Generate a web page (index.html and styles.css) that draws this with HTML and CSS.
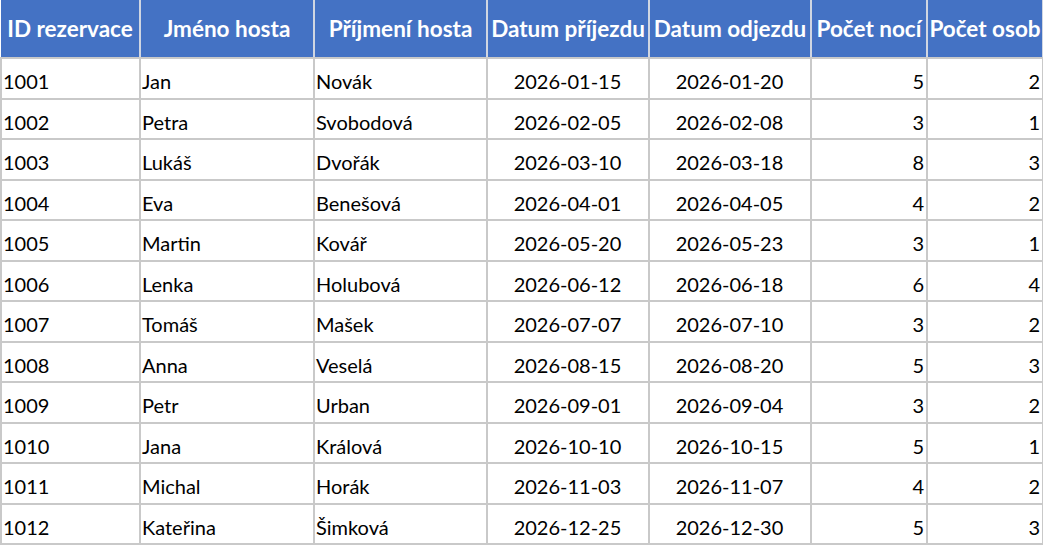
FILE: index.html
```html
<!DOCTYPE html>
<html lang="cs">
<head>
<meta charset="utf-8">
<title>Rezervace</title>
<link rel="stylesheet" href="styles.css">
</head>
<body>
<table class="grid">
  <colgroup>
    <col class="c-id"><col class="c-name"><col class="c-sur"><col class="c-date"><col class="c-date"><col class="c-num"><col class="c-num">
  </colgroup>
  <thead>
    <tr>
      <th>ID rezervace</th><th>Jméno hosta</th><th>Příjmení hosta</th><th>Datum příjezdu</th><th>Datum odjezdu</th><th>Počet nocí</th><th>Počet osob</th>
    </tr>
  </thead>
  <tbody>
    <tr><td>1001</td><td>Jan</td><td>Novák</td><td class="ctr">2026-01-15</td><td class="ctr">2026-01-20</td><td class="num">5</td><td class="num">2</td></tr>
    <tr><td>1002</td><td>Petra</td><td>Svobodová</td><td class="ctr">2026-02-05</td><td class="ctr">2026-02-08</td><td class="num">3</td><td class="num">1</td></tr>
    <tr><td>1003</td><td>Lukáš</td><td>Dvořák</td><td class="ctr">2026-03-10</td><td class="ctr">2026-03-18</td><td class="num">8</td><td class="num">3</td></tr>
    <tr><td>1004</td><td>Eva</td><td>Benešová</td><td class="ctr">2026-04-01</td><td class="ctr">2026-04-05</td><td class="num">4</td><td class="num">2</td></tr>
    <tr><td>1005</td><td>Martin</td><td>Kovář</td><td class="ctr">2026-05-20</td><td class="ctr">2026-05-23</td><td class="num">3</td><td class="num">1</td></tr>
    <tr><td>1006</td><td>Lenka</td><td>Holubová</td><td class="ctr">2026-06-12</td><td class="ctr">2026-06-18</td><td class="num">6</td><td class="num">4</td></tr>
    <tr><td>1007</td><td>Tomáš</td><td>Mašek</td><td class="ctr">2026-07-07</td><td class="ctr">2026-07-10</td><td class="num">3</td><td class="num">2</td></tr>
    <tr><td>1008</td><td>Anna</td><td>Veselá</td><td class="ctr">2026-08-15</td><td class="ctr">2026-08-20</td><td class="num">5</td><td class="num">3</td></tr>
    <tr><td>1009</td><td>Petr</td><td>Urban</td><td class="ctr">2026-09-01</td><td class="ctr">2026-09-04</td><td class="num">3</td><td class="num">2</td></tr>
    <tr><td>1010</td><td>Jana</td><td>Králová</td><td class="ctr">2026-10-10</td><td class="ctr">2026-10-15</td><td class="num">5</td><td class="num">1</td></tr>
    <tr><td>1011</td><td>Michal</td><td>Horák</td><td class="ctr">2026-11-03</td><td class="ctr">2026-11-07</td><td class="num">4</td><td class="num">2</td></tr>
    <tr><td>1012</td><td>Kateřina</td><td>Šimková</td><td class="ctr">2026-12-25</td><td class="ctr">2026-12-30</td><td class="num">5</td><td class="num">3</td></tr>
  </tbody>
</table>
</body>
</html>
```
FILE: styles.css
```css
html, body {
  margin: 0;
  padding: 0;
  background: #ffffff;
}
body {
  font-family: Lato, "Open Sans", sans-serif;
  font-size: 20px;
  color: #000000;
}
.grid {
  border-collapse: collapse;
  table-layout: fixed;
  width: 1042px;
}
.c-id { width: 139px; }
.c-name { width: 174px; }
.c-sur { width: 173px; }
.c-date { width: 162px; }
.c-num { width: 116px; }
.grid th,
.grid td {
  border: 2px solid #c9c9c9;
  white-space: nowrap;
  overflow: visible;
}
.grid th {
  background: #4472c4;
  color: #ffffff;
  font-weight: bold;
  font-size: 22.5px;
  text-align: center;
  height: 57px;
  padding: 0;
  border-top: none;
  border-left-color: #d0d6e2;
  border-right-color: #d0d6e2;
  border-bottom-color: #c9c9c9;
}
.grid th:first-child { border-left: none; }
.grid td {
  height: 40.5px;
  padding: 6px 2px 0 1px;
  box-sizing: border-box;
  text-align: left;
}
.grid td.ctr { text-align: center; }
.grid td.num { text-align: right; }
```
